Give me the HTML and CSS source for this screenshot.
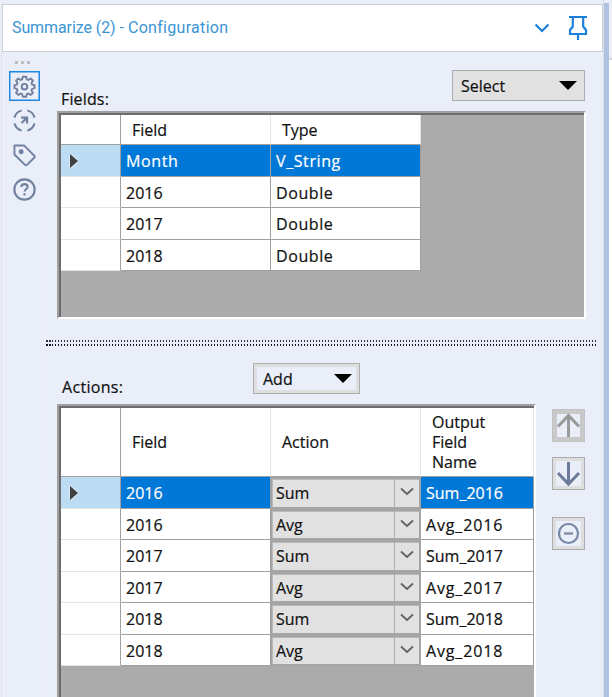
FILE: index.html
```html
<!DOCTYPE html>
<html lang="en">
<head>
<meta charset="utf-8">
<title>Summarize (2) - Configuration</title>
<link rel="stylesheet" href="styles.css">
</head>
<body>
<div class="window">
  <div class="panel">
    <header class="titlebar">
      <h1 class="title"><span class="tight">Summarize</span> <span class="tight">(2)</span> <span>-</span> <span class="wide">Configuration</span></h1>
      <svg class="collapse" width="16" height="12" viewBox="0 0 16 12"><path d="M1.500 2.500 8 9l6.500-6.500" fill="none" stroke="#1c80d8" stroke-width="2.200"/></svg>
      <svg class="pin" width="20" height="26" viewBox="0 0 20 26"><path d="M1 2h18M4.800 2v9.500L2 15v4h16v-4l-2.800-3.500V2M10 19v6" fill="none" stroke="#1c80d8" stroke-width="2.200"/></svg>
    </header>
    <div class="body">
      <nav class="rail">
        <div class="grip"><i></i><i></i><i></i></div>
        <div class="tool active"><svg width="23" height="23" viewBox="0 0 24 24" fill="none" stroke="#71819f" stroke-width="2" stroke-linejoin="round"><path d="M10.200 1.800h3.600l.6 2.700 1.700.7 2.400-1.500 2.300 2.300-1.500 2.400.7 1.700 2.500.6v3.000l-2.500.7-.7 1.700 1.500 2.400-2.300 2.300-2.400-1.500-1.700.7-.6 2.700h-3.600l-.6-2.700-1.700-.7-2.400 1.500-2.300-2.300 1.500-2.400-.7-1.700-2.500-.7v-3l2.500-.6.7-1.700-1.500-2.400 2.300-2.300 2.400 1.500 1.700-.7z"/><circle cx="12" cy="12.200" r="2.900"/></svg></div>
        <div class="tool"><svg width="23" height="23" viewBox="0 0 24 24" fill="none" stroke="#71819f" stroke-width="2"><path d="M9 1.500A11 11 0 0 0 1.500 9M15 1.500A11 11 0 0 1 22.500 9M1.500 15A11 11 0 0 0 9 22.500M22.500 15A11 11 0 0 1 15 22.500"/><path d="M8.500 9h6.200v6M14.500 9.200 9 14.700" stroke-width="2.300"/></svg></div>
        <div class="tool"><svg width="23" height="23" viewBox="0 0 24 24" fill="none" stroke="#71819f" stroke-width="2" stroke-linejoin="round"><path d="M1.500 1.500h10L22.200 12.300q1 1-.1 2L14.500 21.800q-1 .9-2 0L1.500 11z"/><circle cx="8.500" cy="8" r="1.600" fill="#71819f"/></svg></div>
        <div class="tool"><svg width="23" height="23" viewBox="0 0 24 24" fill="none" stroke="#71819f" stroke-width="2.200"><circle cx="12" cy="12" r="10.600"/><path d="M8.700 9.400q.1-3 3.300-3t3.300 2.700c0 2.500-3.200 2.300-3.200 5.100M12 16v2.300"/></svg></div>
      </nav>
      <main class="content">
        <section class="fields">
          <div class="bar">
            <h2 class="label">Fields:</h2>
            <button class="drop select"><span>Select</span><i class="tri"></i></button>
          </div>
          <div class="sheet sheet-fields">
            <div class="row head"><div class="mark"></div><div class="cell">Field</div><div class="cell">Type</div></div>
            <div class="row on"><div class="mark"><i class="cur"></i></div><div class="cell word">Month</div><div class="cell word">V_String</div></div>
            <div class="row"><div class="mark"></div><div class="cell">2016</div><div class="cell word">Double</div></div>
            <div class="row"><div class="mark"></div><div class="cell">2017</div><div class="cell word">Double</div></div>
            <div class="row"><div class="mark"></div><div class="cell">2018</div><div class="cell word">Double</div></div>
          </div>
        </section>
        <div class="splitter"></div>
        <section class="actions">
          <div class="bar bar-actions">
            <h2 class="label">Actions:</h2>
            <button class="drop add"><span>Add</span><i class="tri"></i></button>
          </div>
          <div class="lower">
            <div class="sheet sheet-actions">
              <div class="row head"><div class="mark"></div><div class="cell">Field</div><div class="cell">Action</div><div class="cell">Output<br>Field<br>Name</div></div>
              <div class="row on"><div class="mark"><i class="cur"></i></div><div class="cell">2016</div><div class="combo"><span>Sum</span><b><svg width="14" height="9" viewBox="0 0 14 9"><path d="m1 1.500 6 5.500 6-5.500"/></svg></b></div><div class="cell">Sum_2016</div></div>
              <div class="row"><div class="mark"></div><div class="cell">2016</div><div class="combo"><span>Avg</span><b><svg width="14" height="9" viewBox="0 0 14 9"><path d="m1 1.500 6 5.500 6-5.500"/></svg></b></div><div class="cell word">Avg_2016</div></div>
              <div class="row"><div class="mark"></div><div class="cell">2017</div><div class="combo"><span>Sum</span><b><svg width="14" height="9" viewBox="0 0 14 9"><path d="m1 1.500 6 5.500 6-5.500"/></svg></b></div><div class="cell">Sum_2017</div></div>
              <div class="row"><div class="mark"></div><div class="cell">2017</div><div class="combo"><span>Avg</span><b><svg width="14" height="9" viewBox="0 0 14 9"><path d="m1 1.500 6 5.500 6-5.500"/></svg></b></div><div class="cell word">Avg_2017</div></div>
              <div class="row"><div class="mark"></div><div class="cell">2018</div><div class="combo"><span>Sum</span><b><svg width="14" height="9" viewBox="0 0 14 9"><path d="m1 1.500 6 5.500 6-5.500"/></svg></b></div><div class="cell">Sum_2018</div></div>
              <div class="row"><div class="mark"></div><div class="cell">2018</div><div class="combo"><span>Avg</span><b><svg width="14" height="9" viewBox="0 0 14 9"><path d="m1 1.500 6 5.500 6-5.500"/></svg></b></div><div class="cell word">Avg_2018</div></div>
            </div>
            <div class="side">
              <button class="sq off"><svg width="27" height="27" viewBox="0 0 27 27"><path d="M13.500 25V3.500M3 14.500l10.500-11 10.500 11" stroke="#9a9a9a"/></svg></button>
              <button class="sq"><svg width="27" height="27" viewBox="0 0 27 27"><path d="M13.500 2v22M3 13l10.500 11L24 13" stroke="#6b7a99"/></svg></button>
              <button class="sq minus"><svg width="27" height="27" viewBox="0 0 27 27"><circle cx="13.500" cy="13.500" r="9.500" stroke="#7a89a3" stroke-width="2.200"/><path d="M9 13.500h9" stroke="#7a89a3" stroke-width="2.200"/></svg></button>
            </div>
          </div>
        </section>
      </main>
    </div>
  </div>
  <div class="dock-edge"></div>
  <div class="dock-next"></div>
</div>
</body>
</html>
```
FILE: styles.css
```css
* { box-sizing: border-box; }
body { margin: 0; background: #e9eef9; color: #111; font: 16px/20px "Open Sans", "Noto Sans", sans-serif; -webkit-text-stroke: .2px; overflow: hidden; }
.window { display: grid; grid-template-columns: 604px 5px 3px; height: 697px; }
.panel { display: flex; flex-direction: column; padding: 4px 0 0 2px; min-height: 0; border-right: 1px solid #dadfe9; overflow: hidden; }
.dock-edge { margin-top: 3px; background: #b0c2e2; }
.dock-next { margin-top: 3px; background: linear-gradient(#eef0f5 55px, #d3d5d9 55px 57px, #fff 57px); }

.titlebar { display: flex; align-items: center; width: 601px; height: 48px; flex: none; padding: 0 14px 1px 9px; background: #fff; border: 1.500px solid #cdcfd0; }
.title { display: flex; gap: 4px; margin: 0; padding-top: 1px; flex: 1; font: 400 16px/20px Roboto, sans-serif; -webkit-text-stroke: 0; color: #3a95d3; white-space: nowrap; }
.tight { letter-spacing: -.1px; }
.wide { letter-spacing: .3px; }
.collapse { margin-right: 18px; }

.body { display: flex; flex: 1; min-height: 0; border-left: 1px solid #e0e2e8; margin-left: -1px; }
.rail { display: flex; flex-direction: column; width: 42px; padding: 8px 0 0 7px; border-right: 1px solid #f0f0f1; }
.grip { display: flex; gap: 3px; height: 11px; padding: 1px 0 0 6px; }
.grip i { width: 3px; height: 3px; background: #bdbdbf; }
.tool { display: grid; place-items: center; width: 31px; height: 30px; margin-bottom: 4.500px; }
.tool.active { border: 1px solid #2088df; box-shadow: inset 0 0 0 .5px #2088df; }

.content { flex: 1; min-width: 0; }
.fields { height: 288px; padding: 18px 18px 0 13px; }
.bar { display: flex; justify-content: space-between; align-items: flex-start; height: 41px; }
.label { margin: 19px 0 0 4px; font: inherit; letter-spacing: .15px; }
.drop { display: flex; justify-content: space-between; align-items: center; height: 31px; padding: 0 7px 0 8px; border: 1px solid #adadad; background: #e1e1e1; color: #111; font: inherit; -webkit-text-stroke: .2px; }
.select { width: 133px; }
.add { width: 107px; padding-left: 9px; outline: 3px solid #dedede; outline-offset: -4px; background: #e9eef9; }
.tri { border: solid transparent; border-width: 9px 9px 0; border-top-color: #000; }

.sheet { background: #ababab; border: 2px solid; border-color: #a0a0a0 #fff #fff #a0a0a0; box-shadow: inset 2px 2px #6d6d6d; padding: 2px 0 0 2px; overflow: hidden; }
.sheet-fields { width: 529px; height: 208px; }
.row { display: flex; width: 360px; height: 31.500px; }
.mark { width: 60px; background: #fff; border-right: 1px solid #a0a0a0; border-bottom: 1px solid #e5e5e5; display: flex; align-items: center; padding: 2px 0 0 9px; }
.cell { width: 150px; padding: 2px 0 0 5px; display: flex; align-items: center; background: #fff; border-right: 1px solid #a0a0a0; border-bottom: 1px solid #a0a0a0; }
.word { letter-spacing: .6px; }
.sheet-actions .word { letter-spacing: .85px; }
.head { height: 30px; }
.head .mark { border-bottom-color: #a0a0a0; }
.head .cell { padding: 1px 0 0 11px; border-right-color: #e5e5e5; }
.sheet-actions .head .cell { padding-top: 0; }
.on .mark { background: #bcdcf4; }
.on .cell { background: #0078d7; color: #fff; }
.cur { border: solid transparent; border-width: 7px 0 7px 8px; border-left-color: #404040; filter: drop-shadow(0 0 1px #fff); }

.splitter { height: 6px; margin: 0 6px 0 1px; border: solid transparent; border-width: 0 1px; background: repeating-linear-gradient(90deg, #30333a 0 1.500px, transparent 1.500px 3px) 0 0 / 100% 2px no-repeat, repeating-linear-gradient(90deg, #111318 0 1.500px, transparent 1.500px 3px) 0 4px / 100% 2px no-repeat; }
.actions { height: 351px; padding: 17px 0 0 13px; }
.bar-actions { justify-content: flex-start; }
.bar-actions .label { width: 191px; margin: 14px 0 0 5px; letter-spacing: .3px; }
.lower { display: flex; height: 294px; gap: 16px; }
.sheet-actions { width: 479px; height: 300px; }
.sheet-actions .row { width: 473px; }
.sheet-actions .head { height: 69px; }
.sheet-actions .cell:last-child { width: 113px; }
.combo { display: flex; width: 150px; border: 2px solid #a5a5a5; border-left-width: 1px; background: #e1e1e1; box-shadow: inset 1px 1px #b9b9b9; }
.combo span { flex: 1; padding: 4px 0 0 4px; }
.combo b { width: 25px; border-left: 1px solid #adadad; display: grid; place-items: center; padding: 0 1px 2px 0; }
.combo path { fill: none; stroke: #606060; stroke-width: 1.700; }

.side { padding-top: 5px; }
.sq { display: grid; place-items: center; width: 33px; height: 33px; margin: 0 0 15px; padding: 0; border: 1px solid #adadad; background: #e9eef9; box-shadow: inset 0 0 0 3px #dedede; }
.sq.off { border-color: #c2c2c2; box-shadow: inset 0 0 0 4px #c9c9c9; }
.sq svg { fill: none; stroke-width: 3; }
.minus { margin-top: 27px; }
```
